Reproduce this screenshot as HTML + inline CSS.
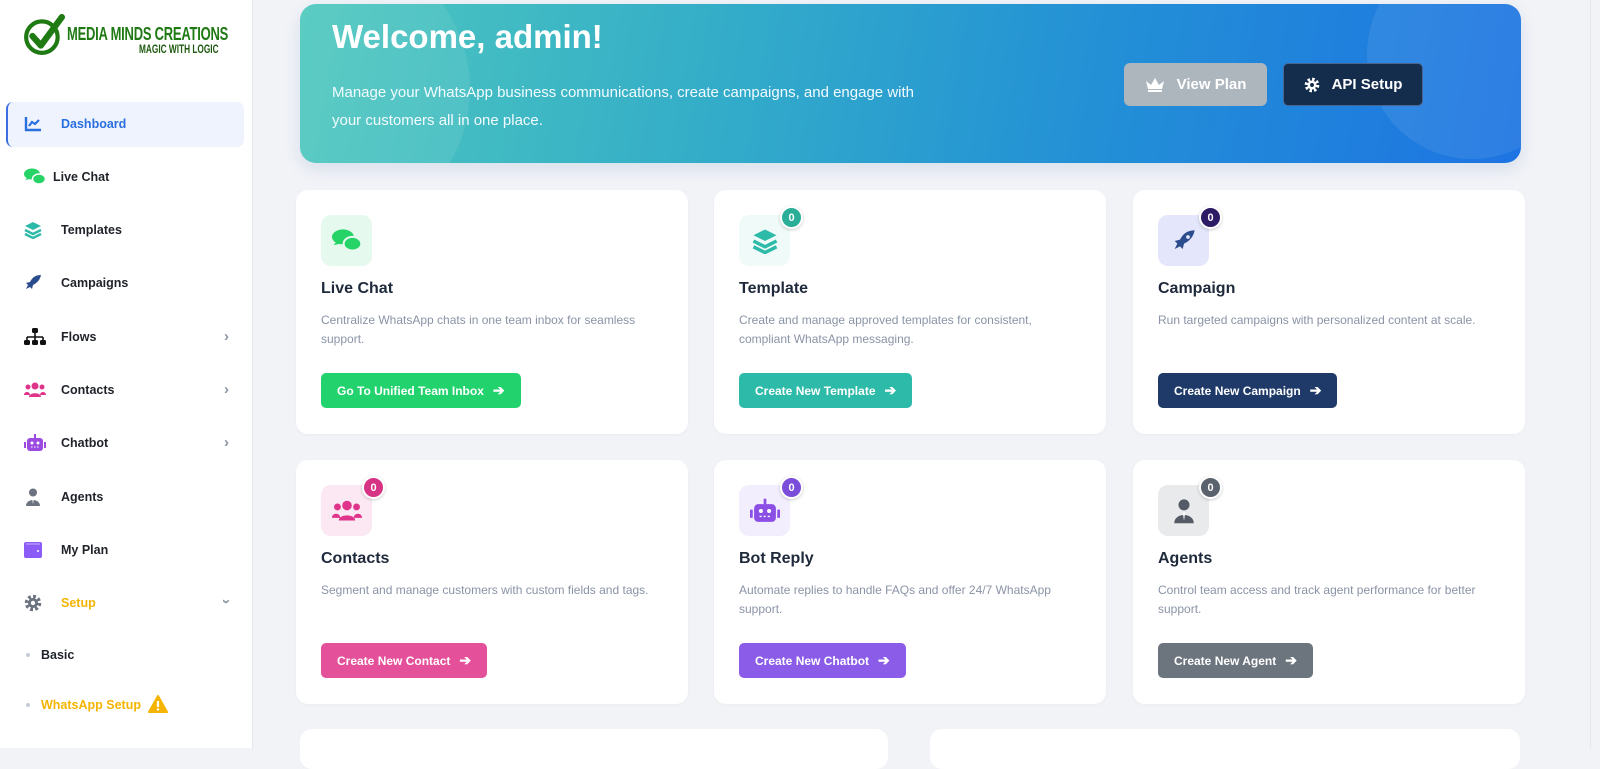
<!DOCTYPE html>
<html><head><meta charset="utf-8"><style>
*{margin:0;padding:0;box-sizing:border-box}
body{width:1600px;height:748px;overflow:hidden;background:#f1f3f7;font-family:"Liberation Sans",sans-serif;position:relative}
.sb{position:absolute;left:0;top:0;width:253px;height:748px;background:#fff;border-right:1px solid #e3e6ec}
.it{position:absolute;left:24px;font-size:12.5px;font-weight:bold;color:#1f2329;display:flex;align-items:center}
.it svg{position:absolute;left:0}
.it span{position:absolute;left:37px;white-space:nowrap}
.chev{position:absolute;left:200px;top:-9px;color:#8b95a5;font-size:15px;font-style:normal}
.banner{position:absolute;left:300px;top:4px;width:1221px;height:159px;border-radius:16px;overflow:hidden;background:linear-gradient(100deg,#4ec8bd 0%,#33acc9 35%,#2390d6 65%,#1d74e2 100%);box-shadow:0 6px 16px rgba(30,80,160,.12)}
.card{position:absolute;width:392px;height:244px;background:#fff;border-radius:12px;box-shadow:0 1px 4px rgba(0,0,0,.03)}
.ib{position:absolute;left:25px;top:25px;width:51px;height:51px;border-radius:10px;display:flex;align-items:center;justify-content:center}
.bd{position:absolute;left:66px;top:16px;width:23px;height:23px;border-radius:50%;border:2px solid #fff;color:#fff;font-size:11px;font-weight:bold;display:flex;align-items:center;justify-content:center;box-shadow:0 1px 3px rgba(0,0,0,.2)}
.ct{position:absolute;left:25px;top:90px;font-size:16px;font-weight:bold;color:#1e293b}
.cd{position:absolute;left:25px;top:121px;width:340px;font-size:12px;line-height:19px;color:#8a93a6}
.btn{position:absolute;left:25px;top:183px;height:35px;border-radius:5px;color:#fff;font-size:12px;font-weight:bold;display:flex;align-items:center;padding:0 16px;white-space:nowrap}
.btn b{margin-left:9px;font-size:14px}
</style></head><body>
<div class="sb">
 <svg style="position:absolute;left:23px;top:14px" width="42" height="42" viewBox="0 0 40 40"><circle cx="18" cy="22" r="15" fill="none" stroke="#1f7a14" stroke-width="4"/><path d="M9 21l8 9L37 3" fill="none" stroke="#1f7a14" stroke-width="6" stroke-linecap="round" stroke-linejoin="round"/></svg>
 <div style="position:absolute;left:67px;top:24px;font-size:18px;font-weight:bold;color:#1f7a14;letter-spacing:-0.3px;transform:scaleX(.72);transform-origin:left;white-space:nowrap">MEDIA MINDS CREATIONS</div>
 <div style="position:absolute;left:139px;top:44px;font-size:11.5px;font-weight:bold;color:#1f5a10;transform:scaleX(.72);transform-origin:left;white-space:nowrap">MAGIC WITH LOGIC</div>
 <div style="position:absolute;left:6px;top:102px;width:238px;height:45px;background:#eef3fd;border-radius:7px;border-left:2px solid #3b6fe0"></div>
 <div class="it" style="top:124px;color:#2a6fe0"><svg width="18" height="16" viewBox="0 0 18 16" style="top:-8px"><path d="M2 1v13h15" fill="none" stroke="#2a6fe0" stroke-width="2.4"/><path d="M5 10l3-4 3 2 4-4" fill="none" stroke="#2a6fe0" stroke-width="2.2"/></svg><span>Dashboard</span></div>
 <div class="it" style="top:177px"><svg width="22" height="18" viewBox="0 0 22 18" style="top:-9px;left:0"><ellipse cx="8" cy="6" rx="8" ry="5.5" fill="#25d366"/><path d="M1 12l3-3 2 2z" fill="#25d366"/><ellipse cx="15" cy="11" rx="6.5" ry="5" fill="#25d366" stroke="#fff" stroke-width="1.5"/></svg><span style="left:29px">Live Chat</span></div>
 <div class="it" style="top:230px"><svg width="18" height="18" viewBox="0 0 18 18" style="top:-9px"><path d="M9 1l8 4-8 4-8-4z" fill="#2dbaa8"/><path d="M1 9l8 4 8-4M1 13l8 4 8-4" fill="none" stroke="#2dbaa8" stroke-width="2.4"/></svg><span>Templates</span></div>
 <div class="it" style="top:283px"><svg width="18" height="18" viewBox="0 0 18 18" style="top:-9px"><path d="M17 1c-6 0-9 3-11 7l-4 1 2 2-2 4 4-2 2 2 1-4c4-2 7-5 8-10z" fill="#2b4c8c"/></svg><span>Campaigns</span></div>
 <div class="it" style="top:337px"><svg width="22" height="18" viewBox="0 0 22 18" style="top:-9px"><rect x="8" y="0" width="6" height="5" rx="1.5" fill="#111"/><path d="M11 5v4M3 9h16M3 9v4M11 9v4M19 9v4" stroke="#111" stroke-width="1.6" fill="none"/><rect x="0" y="12" width="6" height="5" rx="1.5" fill="#111"/><rect x="8" y="12" width="6" height="5" rx="1.5" fill="#111"/><rect x="16" y="12" width="6" height="5" rx="1.5" fill="#111"/></svg><span>Flows</span><i class="chev">&#x203A;</i></div>
 <div class="it" style="top:390px"><svg width="22" height="16" viewBox="0 0 22 16" style="top:-8px"><circle cx="11" cy="4" r="3.5" fill="#e0338a"/><circle cx="4" cy="5" r="2.5" fill="#e0338a"/><circle cx="18" cy="5" r="2.5" fill="#e0338a"/><path d="M5 15c0-5 12-5 12 0zM0 13c0-4 6-4 6 0zM16 13c0-4 6-4 6 0z" fill="#e0338a"/></svg><span>Contacts</span><i class="chev">&#x203A;</i></div>
 <div class="it" style="top:443px"><svg width="22" height="18" viewBox="0 0 22 18" style="top:-9px"><rect x="3" y="4" width="16" height="13" rx="3" fill="#9b4be0"/><rect x="0" y="8" width="2" height="6" fill="#9b4be0"/><rect x="20" y="8" width="2" height="6" fill="#9b4be0"/><rect x="10" y="0" width="2" height="4" fill="#9b4be0"/><circle cx="8" cy="9" r="1.5" fill="#fff"/><circle cx="14" cy="9" r="1.5" fill="#fff"/><path d="M7 13h8" stroke="#fff" stroke-dasharray="1.5 1.5"/></svg><span>Chatbot</span><i class="chev">&#x203A;</i></div>
 <div class="it" style="top:497px"><svg width="18" height="18" viewBox="0 0 18 18" style="top:-9px"><circle cx="9" cy="4.5" r="4" fill="#6b7280"/><path d="M2 18c0-8 14-8 14 0z" fill="#6b7280"/><path d="M8 10h2l-1 6z" fill="#fff"/></svg><span>Agents</span></div>
 <div class="it" style="top:550px"><svg width="18" height="16" viewBox="0 0 18 16" style="top:-8px"><rect x="0" y="0" width="18" height="16" rx="2" fill="#8b5cf6"/><path d="M2 2h14" stroke="#c4b5fd"/><circle cx="14" cy="9" r="1" fill="#fff"/></svg><span>My Plan</span></div>
 <div class="it" style="top:603px;color:#f5b400"><svg width="18" height="18" viewBox="0 0 18 18" style="top:-9px"><circle cx="9" cy="9" r="6" fill="none" stroke="#6b7280" stroke-width="4.5" stroke-dasharray="2.6 2.1"/><circle cx="9" cy="9" r="5" fill="#6b7280"/><circle cx="9" cy="9" r="2.2" fill="#fff"/></svg><span>Setup</span><i class="chev" style="transform:rotate(90deg);top:-10px">&#x203A;</i></div>
 <div style="position:absolute;left:26px;top:653px;width:4px;height:4px;border-radius:50%;background:#c5ccd6"></div>
 <div style="position:absolute;left:41px;top:648px;font-size:12.5px;font-weight:bold;color:#1f2329">Basic</div>
 <div style="position:absolute;left:26px;top:703px;width:4px;height:4px;border-radius:50%;background:#c5ccd6"></div>
 <div style="position:absolute;left:41px;top:698px;font-size:12.5px;font-weight:bold;color:#f5b400">WhatsApp Setup</div>
 <svg style="position:absolute;left:148px;top:695px" width="20" height="18" viewBox="0 0 20 18"><path d="M10 1l9 16H1z" fill="#f5b400" stroke="#f5b400" stroke-linejoin="round" stroke-width="2"/><path d="M10 6v6" stroke="#fff" stroke-width="2.2"/><circle cx="10" cy="14.5" r="1.2" fill="#fff"/></svg>
</div>

<div class="banner">
 <div style="position:absolute;left:-120px;top:-60px;width:290px;height:290px;border-radius:50%;background:rgba(255,255,255,.08)"></div>
 <div style="position:absolute;left:1067px;top:-55px;width:210px;height:210px;border-radius:50%;background:rgba(255,255,255,.08)"></div>
 <div style="position:absolute;left:32px;top:14px;font-size:33px;font-weight:bold;color:#fff">Welcome, admin!</div>
 <div style="position:absolute;left:32px;top:75px;font-size:15px;line-height:28px;color:#f2fbff">Manage your WhatsApp business communications, create campaigns, and engage with<br>your customers all in one place.</div>
 <div style="position:absolute;left:824px;top:59px;width:143px;height:43px;border-radius:6px;background:#adb5bd;color:#fff;font-size:15px;font-weight:bold;display:flex;align-items:center;justify-content:center"><svg width="20" height="16" viewBox="0 0 20 16" style="margin-right:12px"><path d="M1 4l5 4 4-7 4 7 5-4-2 8H3z" fill="#fff"/><rect x="3" y="13" width="14" height="2" fill="#fff"/></svg>View Plan</div>
 <div style="position:absolute;left:983px;top:59px;width:140px;height:43px;border-radius:5px;background:#142d4c;border:1px solid #4a6690;color:#fff;font-size:15px;font-weight:bold;display:flex;align-items:center;justify-content:center"><svg width="16" height="16" viewBox="0 0 18 18" style="margin-right:12px"><circle cx="9" cy="9" r="6" fill="none" stroke="#fff" stroke-width="4.5" stroke-dasharray="2.6 2.1"/><circle cx="9" cy="9" r="5" fill="#fff"/><circle cx="9" cy="9" r="2.2" fill="#142d4c"/></svg>API Setup</div>
</div>

<div class="card" style="left:296px;top:190px">
 <div class="ib" style="background:#e6f9ee"><svg width="30" height="26" viewBox="0 0 22 18"><ellipse cx="8" cy="6" rx="8" ry="5.5" fill="#25d366"/><path d="M1 12l3-3 2 2z" fill="#25d366"/><ellipse cx="15" cy="11" rx="6.5" ry="5" fill="#25d366" stroke="#e6f9ee" stroke-width="1.5"/></svg></div>
 <div class="ct">Live Chat</div>
 <div class="cd">Centralize WhatsApp chats in one team inbox for seamless support.</div>
 <div class="btn" style="background:#22d36d">Go To Unified Team Inbox<b>&#x2794;</b></div>
</div>
<div class="card" style="left:714px;top:190px">
 <div class="ib" style="background:#f0fbf9"><svg width="26" height="26" viewBox="0 0 18 18"><path d="M9 1l8 4-8 4-8-4z" fill="#2dbaa8"/><path d="M1 9l8 4 8-4M1 13l8 4 8-4" fill="none" stroke="#2dbaa8" stroke-width="2.4"/></svg></div>
 <div class="bd" style="background:#2aae98">0</div>
 <div class="ct">Template</div>
 <div class="cd">Create and manage approved templates for consistent, compliant WhatsApp messaging.</div>
 <div class="btn" style="background:#2dbaa8">Create New Template<b>&#x2794;</b></div>
</div>
<div class="card" style="left:1133px;top:190px">
 <div class="ib" style="background:#e4e6fb"><svg width="24" height="24" viewBox="0 0 18 18"><path d="M17 1c-6 0-9 3-11 7l-4 1 2 2-2 4 4-2 2 2 1-4c4-2 7-5 8-10z" fill="#2b4c8c"/><circle cx="12" cy="6" r="1.4" fill="#e4e6fb"/></svg></div>
 <div class="bd" style="background:#2d1b66">0</div>
 <div class="ct">Campaign</div>
 <div class="cd">Run targeted campaigns with personalized content at scale.</div>
 <div class="btn" style="background:#1f3a68">Create New Campaign<b>&#x2794;</b></div>
</div>
<div class="card" style="left:296px;top:460px">
 <div class="ib" style="background:#fce8f2"><svg width="30" height="22" viewBox="0 0 22 16"><circle cx="11" cy="4" r="3.5" fill="#e0338a"/><circle cx="4" cy="5" r="2.5" fill="#e0338a"/><circle cx="18" cy="5" r="2.5" fill="#e0338a"/><path d="M5 15c0-5 12-5 12 0zM0 13c0-4 6-4 6 0zM16 13c0-4 6-4 6 0z" fill="#e0338a"/></svg></div>
 <div class="bd" style="background:#d63384">0</div>
 <div class="ct">Contacts</div>
 <div class="cd">Segment and manage customers with custom fields and tags.</div>
 <div class="btn" style="background:#e5509a">Create New Contact<b>&#x2794;</b></div>
</div>
<div class="card" style="left:714px;top:460px">
 <div class="ib" style="background:#f3eefd"><svg width="30" height="26" viewBox="0 0 22 18"><rect x="3" y="4" width="16" height="13" rx="3" fill="#8b4fe6"/><rect x="0" y="8" width="2" height="6" fill="#8b4fe6"/><rect x="20" y="8" width="2" height="6" fill="#8b4fe6"/><rect x="10" y="0" width="2" height="4" fill="#8b4fe6"/><circle cx="8" cy="9" r="1.5" fill="#fff"/><circle cx="14" cy="9" r="1.5" fill="#fff"/><path d="M7 13h8" stroke="#fff" stroke-dasharray="1.5 1.5"/></svg></div>
 <div class="bd" style="background:#7b4ddb">0</div>
 <div class="ct">Bot Reply</div>
 <div class="cd">Automate replies to handle FAQs and offer 24/7 WhatsApp support.</div>
 <div class="btn" style="background:#8b5ce8">Create New Chatbot<b>&#x2794;</b></div>
</div>
<div class="card" style="left:1133px;top:460px">
 <div class="ib" style="background:#e9eaec"><svg width="22" height="26" viewBox="0 0 18 20"><circle cx="9" cy="5" r="4.5" fill="#545b66"/><path d="M1 20c0-9 16-9 16 0z" fill="#545b66"/><path d="M8 11h2l-1 7z" fill="#fff"/></svg></div>
 <div class="bd" style="background:#5a626d">0</div>
 <div class="ct">Agents</div>
 <div class="cd">Control team access and track agent performance for better support.</div>
 <div class="btn" style="background:#6c757d">Create New Agent<b>&#x2794;</b></div>
</div>
<div style="position:absolute;left:300px;top:729px;width:588px;height:40px;background:#fff;border-radius:12px"></div>
<div style="position:absolute;left:930px;top:729px;width:590px;height:40px;background:#fff;border-radius:12px"></div>
<div style="position:absolute;left:1590px;top:0;width:1px;height:748px;background:#e3e6ec"></div>
</body></html>
